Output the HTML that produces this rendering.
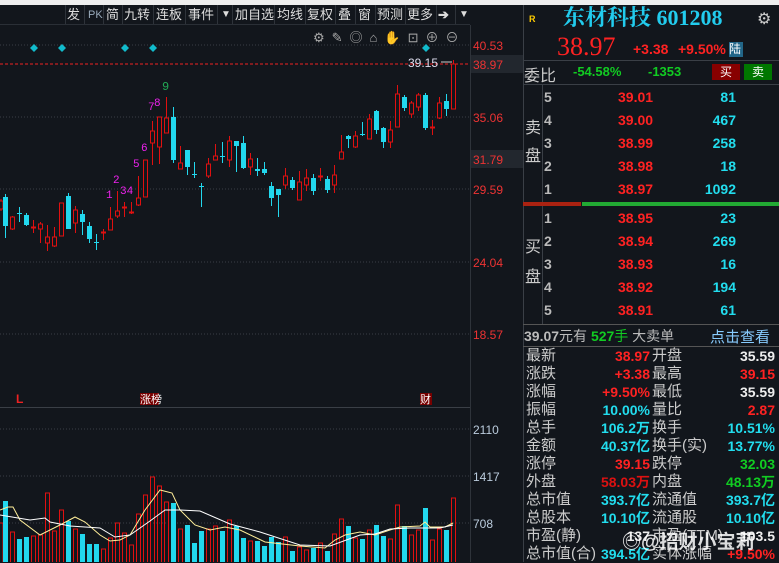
<!DOCTYPE html>
<html><head><meta charset="utf-8"><style>
*{margin:0;padding:0;box-sizing:border-box}
body{width:779px;height:562px;overflow:hidden;background:#12161c;font-family:"Liberation Sans","Noto Sans CJK SC",sans-serif;position:relative;color:#ccc}
.a{position:absolute;white-space:nowrap}
.tb{top:5px;height:20px;font-size:13px;color:#ddd;line-height:20px}
.sep{position:absolute;top:5px;width:1px;height:19px;background:#2e333a}
.r{color:#f22}.g{color:#1c2}.c{color:#2de}.w{color:#eee}.gr{color:#bbb}
.row{position:absolute;left:523px;width:256px;height:18px;font-size:14px;line-height:18px}
.row span{position:absolute;font-weight:bold;font-size:14px}
.row .l1{left:3px;font-weight:normal;font-size:15px;color:#ccc}
.row .l2{left:129px;font-weight:normal;font-size:15px;color:#ccc}
.row .v1{right:129px}.row .v2{right:4px}
.ob{position:absolute;left:523px;width:256px;height:23px;font-size:14px;font-weight:bold;line-height:23px}
.ob span{position:absolute}
</style></head><body>
<div class="a" style="left:0;top:0;width:779px;height:5px;background:#eeeeee"></div>
<div class="a" style="left:0;top:24px;width:470px;height:1px;background:#2a2f36"></div>
<div class="sep" style="left:65px"></div><div class="sep" style="left:84px"></div><div class="sep" style="left:103px"></div><div class="sep" style="left:122px"></div><div class="sep" style="left:153px"></div><div class="sep" style="left:185px"></div><div class="sep" style="left:217px"></div><div class="sep" style="left:232px"></div><div class="sep" style="left:274px"></div><div class="sep" style="left:305px"></div><div class="sep" style="left:335px"></div><div class="sep" style="left:355px"></div><div class="sep" style="left:375px"></div><div class="sep" style="left:405px"></div><div class="sep" style="left:436px"></div><div class="sep" style="left:455px"></div>
<div class="a tb" style="left:67px">发</div>
<div class="a tb" style="left:88px;font-size:11px;color:#9ab">PK</div>
<div class="a tb" style="left:106px">简</div>
<div class="a tb" style="left:124px">九转</div>
<div class="a tb" style="left:156px">连板</div>
<div class="a tb" style="left:188px">事件</div>
<div class="a tb" style="left:221px;font-size:10px">▼</div>
<div class="a tb" style="left:235px">加自选</div>
<div class="a tb" style="left:277px">均线</div>
<div class="a tb" style="left:307px">复权</div>
<div class="a tb" style="left:338px">叠</div>
<div class="a tb" style="left:358px">窗</div>
<div class="a tb" style="left:377px">预测</div>
<div class="a tb" style="left:407px">更多</div>
<div class="a tb" style="left:438px;font-weight:bold">➔</div>
<div class="a tb" style="left:459px;font-size:10px">▼</div>
<div class="a" style="left:313px;top:27px;font-size:13px;color:#aaa;letter-spacing:7px">⚙✎◎⌂✋⊡⊕⊖</div>

<svg class="a" style="left:0;top:0" width="523" height="562">
<g stroke="#3a3f46" stroke-dasharray="1,2" stroke-width="1">
<line x1="0" y1="45" x2="470" y2="45"/><line x1="0" y1="117" x2="470" y2="117"/><line x1="0" y1="189" x2="470" y2="189"/><line x1="0" y1="262" x2="470" y2="262"/><line x1="0" y1="334" x2="470" y2="334"/>
<line x1="0" y1="429" x2="470" y2="429"/><line x1="0" y1="476" x2="470" y2="476"/><line x1="0" y1="523" x2="470" y2="523"/>
</g>
<line x1="0" y1="64" x2="470" y2="64" stroke="#e22" stroke-dasharray="3,2"/>
<line x1="470.5" y1="25" x2="470.5" y2="562" stroke="#2e333a"/>
<line x1="0" y1="407.5" x2="470" y2="407.5" stroke="#3a3f46"/>
<rect x="471" y="55" width="52" height="18" fill="#22272e"/>
<rect x="471" y="150" width="52" height="18" fill="#22272e"/>
<g fill="#1bc" ><path d="M34 44l4 4-4 4-4-4z"/><path d="M62 44l4 4-4 4-4-4z"/><path d="M125 44l4 4-4 4-4-4z"/><path d="M153 44l4 4-4 4-4-4z"/><path d="M426 44l4 4-4 4-4-4z"/></g>
<g font-family="Liberation Sans" font-size="12" fill="#e33">
<text x="473" y="50">40.53</text><text x="473" y="69">38.97</text><text x="473" y="122">35.06</text><text x="473" y="164">31.79</text><text x="473" y="194">29.59</text><text x="473" y="267">24.04</text><text x="473" y="339">18.57</text></g>
<g font-family="Liberation Sans" font-size="12" fill="#bcd">
<text x="473" y="434">2110</text><text x="473" y="481">1417</text><text x="473" y="528">708</text></g>
<text x="408" y="67" font-size="12" fill="#dde" font-family="Liberation Sans">39.15</text>
<line x1="441" y1="62" x2="452" y2="62" stroke="#ccc"/>
<text x="16" y="403" font-size="12" fill="#e22" font-weight="bold">L</text>
<rect x="140" y="393" width="19" height="12" fill="#700"/><text x="140" y="403" font-size="11" fill="#fff">涨榜</text>
<rect x="420" y="393" width="12" height="12" fill="#700"/><text x="420" y="403" font-size="11" fill="#fff">财</text>
<g font-size="11" fill="#e2e" font-family="Liberation Mono">
<text x="106" y="198">1</text><text x="113" y="183">2</text><text x="120" y="194">34</text><text x="133" y="167">5</text><text x="141" y="151">6</text><text x="148" y="110">7</text><text x="154" y="106">8</text></g>
<text x="162" y="90" font-size="12" fill="#2a5" font-family="Liberation Mono">9</text>
<g id="k"></g>
<polyline fill="none" stroke="#fe9" points="0,510 8,507 13,507 20,520 40,535 50,530 60,525 75,517 85,522 100,535 110,541 120,540 130,535 145,510 160,490 172,493 180,510 195,525 210,530 225,527 240,530 265,542 300,546 325,548 335,540 345,535 360,532 375,535 390,530 400,527 420,526 425,522 430,527 445,527 453,523"/>
<polyline fill="none" stroke="#fff" points="0,515 30,520 45,518 50,522 70,526 100,528 115,537 130,535 150,521 165,510 180,510 200,511 230,524 260,532 300,545 330,546 360,535 375,534 390,529 410,528 440,528 453,525"/>
</svg>
<script>
var C=[[1,'r',201,209,199,211],[5.5,'c',197,226,194,238],[12.5,'r',217,229,216,230],[19.5,'c',213,214,207,222],[26.5,'c',215,225,213,226],[33.5,'r',227,228,220,233],[40.5,'r',224,229,222,243],[47.5,'r',237,243,225,251],[54.5,'r',237,246,227,247],[61.5,'r',203,236,203,236],[68.5,'c',196,229,193,229],[75.5,'r',210,223,206,233],[82.5,'c',214,222,210,235],[89.5,'c',226,239,222,243],[96.5,'c',242,243,234,250],[103.5,'r',232,233,229,240],[110.5,'r',219,230,207,230],[117.5,'r',211,216,191,218],[124.5,'r',207,208,202,217],[131.5,'r',212,213,202,214],[138.5,'r',198,205,176,206],[145.5,'r',160,197,160,197],[152.5,'r',131,143,121,165],[159.5,'r',117,147,117,164],[166.5,'r',118,133,97,133],[173.5,'c',117,160,107,163],[180.5,'r',163,169,146,169],[187.5,'c',150,167,150,175],[194.5,'c',174,175,162,178],[201.5,'c',186,187,183,207],[208.5,'r',164,176,158,178],[215.5,'r',156,160,144,160],[222.5,'c',156,157,142,163],[229.5,'r',141,160,136,167],[236.5,'c',141,146,141,172],[243.5,'c',143,168,136,169],[250.5,'r',159,167,153,175],[257.5,'c',169,171,158,176],[264.5,'c',169,173,162,175],[271.5,'c',186,198,182,206],[278.5,'c',189,195,189,217],[285.5,'r',176,185,168,189],[292.5,'c',180,188,177,190],[299.5,'r',182,200,171,200],[306.5,'r',178,185,169,191],[313.5,'c',178,191,174,195],[320.5,'r',176,177,168,181],[327.5,'c',179,190,176,193],[334.5,'r',175,185,165,193],[341.5,'r',152,159,135,159],[348.5,'c',136,139,135,148],[355.5,'r',136,147,131,148],[362.5,'c',134,135,122,136],[369.5,'r',119,139,114,139],[376.5,'c',111,130,110,134],[383.5,'c',128,142,127,148],[390.5,'r',130,142,121,148],[397.5,'r',94,127,85,127],[404.5,'c',97,108,95,111],[411.5,'r',103,114,101,118],[418.5,'r',95,107,93,111],[425.5,'c',95,128,93,130],[432.5,'r',127,128,120,135],[439.5,'r',103,118,97,119],[446.5,'c',101,109,94,116],[453.5,'r',64,109,60,109]];
var V=[523,501,532,539,537,536,535,493,531,510,521,529,534,544,544,549,538,523,533,545,514,495,477,486,502,503,529,525,543,531,529,526,531,520,526,538,541,541,546,537,542,537,551,547,550,548,543,551,534,519,526,538,539,530,525,536,539,505,526,535,530,508,540,529,530,498];
var s='';C.forEach(function(d,i){var x=d[0],col=d[1]=='r'?'#e01010':'#22d8ee';
s+='<line x1="'+x+'" y1="'+d[4]+'" x2="'+x+'" y2="'+d[5]+'" stroke="'+col+'"/>';
var h=Math.max(d[3]-d[2],1);
if(d[1]=='r')s+='<rect x="'+(x-2)+'" y="'+d[2]+'" width="4" height="'+h+'" fill="#12161c" stroke="'+col+'"/>';
else s+='<rect x="'+(x-2.5)+'" y="'+d[2]+'" width="5" height="'+h+'" fill="'+col+'"/>';
var vt=V[i];if(vt!==undefined){if(d[1]=='r')s+='<rect x="'+(x-2)+'" y="'+vt+'" width="4" height="'+(563-vt)+'" fill="none" stroke="'+col+'"/>';else s+='<rect x="'+(x-2.5)+'" y="'+vt+'" width="5" height="'+(563-vt)+'" fill="'+col+'"/>';}});
document.getElementById('k').innerHTML=s;
</script>

<div class="a" style="left:523px;top:5px;width:1px;height:557px;background:#3a3f46"></div>
<div class="a" style="left:529px;top:14px;font-size:9px;color:#fc0;font-weight:bold">R</div>
<div class="a" style="left:563px;top:4px;font-size:22px;line-height:28px;color:#2ce;font-weight:bold;font-family:'Liberation Serif','Noto Serif CJK SC',serif">东材科技 601208</div>
<div class="a" style="left:757px;top:9px;font-size:16px;color:#ccc">⚙</div>
<div class="a r" style="left:557px;top:31px;font-size:26px;line-height:32px;font-family:'Liberation Serif',serif">38.97</div>
<div class="a r" style="left:633px;top:41px;font-size:14px;font-weight:bold">+3.38</div>
<div class="a r" style="left:678px;top:41px;font-size:14px;font-weight:bold">+9.50%</div>
<div class="a" style="left:729px;top:42px;width:14px;height:15px;background:#268;color:#fff;font-size:12px;line-height:15px">陆</div>
<div class="a" style="left:523px;top:60px;width:256px;height:1px;background:#3a3f46"></div>
<div class="a" style="left:524px;top:62px;font-size:16px;color:#ccc">委比</div>
<div class="a g" style="left:573px;top:64px;font-size:13px;font-weight:bold">-54.58%</div>
<div class="a g" style="left:648px;top:64px;font-size:13px;font-weight:bold">-1353</div>
<div class="a" style="left:712px;top:64px;width:28px;height:16px;background:#800;color:#fff;font-size:12px;text-align:center;line-height:16px">买</div>
<div class="a" style="left:744px;top:64px;width:28px;height:16px;background:#070;color:#fff;font-size:12px;text-align:center;line-height:16px">卖</div>
<div class="a" style="left:523px;top:84px;width:256px;height:1px;background:#3a3f46"></div>
<div class="a" style="left:542px;top:85px;width:1px;height:239px;background:#3a3f46"></div>
<div class="a" style="left:525px;top:115px;font-size:16px;line-height:28px;color:#ccc">卖<br>盘</div>
<div class="a" style="left:525px;top:233px;font-size:16px;line-height:30px;color:#ccc">买<br>盘</div>
<div class="a" style="left:523px;top:202px;width:58px;height:4px;background:#a21"></div>
<div class="a" style="left:582px;top:202px;width:197px;height:4px;background:#2a3"></div>
<div class="ob" style="top:86px"><span class="gr" style="left:21px">5</span><span class="r" style="left:95px">39.01</span><span class="c" style="right:43px">81</span></div>
<div class="ob" style="top:109px"><span class="gr" style="left:21px">4</span><span class="r" style="left:95px">39.00</span><span class="c" style="right:43px">467</span></div>
<div class="ob" style="top:132px"><span class="gr" style="left:21px">3</span><span class="r" style="left:95px">38.99</span><span class="c" style="right:43px">258</span></div>
<div class="ob" style="top:155px"><span class="gr" style="left:21px">2</span><span class="r" style="left:95px">38.98</span><span class="c" style="right:43px">18</span></div>
<div class="ob" style="top:178px"><span class="gr" style="left:21px">1</span><span class="r" style="left:95px">38.97</span><span class="c" style="right:43px">1092</span></div>
<div class="ob" style="top:207px"><span class="gr" style="left:21px">1</span><span class="r" style="left:95px">38.95</span><span class="c" style="right:43px">23</span></div>
<div class="ob" style="top:230px"><span class="gr" style="left:21px">2</span><span class="r" style="left:95px">38.94</span><span class="c" style="right:43px">269</span></div>
<div class="ob" style="top:253px"><span class="gr" style="left:21px">3</span><span class="r" style="left:95px">38.93</span><span class="c" style="right:43px">16</span></div>
<div class="ob" style="top:276px"><span class="gr" style="left:21px">4</span><span class="r" style="left:95px">38.92</span><span class="c" style="right:43px">194</span></div>
<div class="ob" style="top:299px"><span class="gr" style="left:21px">5</span><span class="r" style="left:95px">38.91</span><span class="c" style="right:43px">61</span></div>
<div class="a" style="left:523px;top:324px;width:256px;height:1px;background:#555"></div>
<div class="a" style="left:524px;top:326px;font-size:14px;color:#bbb"><b>39.07</b>元有 <b class="g">527</b><span class="g">手</span> 大卖单</div>
<div class="a" style="left:710px;top:326px;font-size:15px;color:#8cf">点击查看</div>
<div class="a" style="left:523px;top:346px;width:256px;height:1px;background:#555"></div>
<div class="row" style="top:347px"><span class="l1">最新</span><span class="v1 r">38.97</span><span class="l2">开盘</span><span class="v2 w">35.59</span></div>
<div class="row" style="top:365px"><span class="l1">涨跌</span><span class="v1 r">+3.38</span><span class="l2">最高</span><span class="v2 r">39.15</span></div>
<div class="row" style="top:383px"><span class="l1">涨幅</span><span class="v1 r">+9.50%</span><span class="l2">最低</span><span class="v2 w">35.59</span></div>
<div class="row" style="top:401px"><span class="l1">振幅</span><span class="v1 c">10.00%</span><span class="l2">量比</span><span class="v2 r">2.87</span></div>
<div class="row" style="top:419px"><span class="l1">总手</span><span class="v1 c">106.2万</span><span class="l2">换手</span><span class="v2 c">10.51%</span></div>
<div class="row" style="top:437px"><span class="l1">金额</span><span class="v1 c">40.37亿</span><span class="l2">换手(实)</span><span class="v2 c">13.77%</span></div>
<div class="row" style="top:455px"><span class="l1">涨停</span><span class="v1 r">39.15</span><span class="l2">跌停</span><span class="v2 g">32.03</span></div>
<div class="row" style="top:473px"><span class="l1">外盘</span><span class="v1" style="color:#d11">58.03万</span><span class="l2">内盘</span><span class="v2 g">48.13万</span></div>
<div class="row" style="top:491px"><span class="l1">总市值</span><span class="v1 c">393.7亿</span><span class="l2">流通值</span><span class="v2 c">393.7亿</span></div>
<div class="row" style="top:509px"><span class="l1">总股本</span><span class="v1 c">10.10亿</span><span class="l2">流通股</span><span class="v2 c">10.10亿</span></div>
<div class="row" style="top:527px"><span class="l1">市盈(静)</span><span class="v1 w">137</span><span class="l2">市盈(TTM)</span><span class="v2 w">103.5</span></div>
<div class="row" style="top:545px"><span class="l1">总市值(合)</span><span class="v1 c">394.5亿</span><span class="l2">实体涨幅</span><span class="v2 r">+9.50%</span></div>
<div class="a" style="left:622px;top:527px;font-size:19px;color:rgba(255,255,255,0.85);font-weight:bold">◎@招财小宝莉</div>
</body></html>
